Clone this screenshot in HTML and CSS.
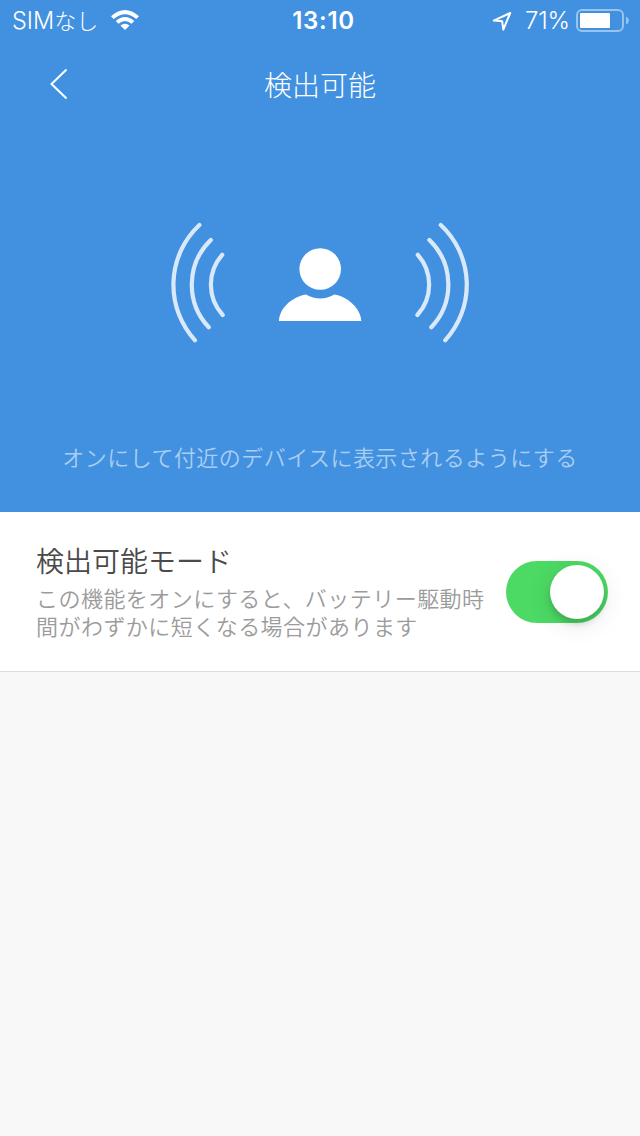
FILE: index.html
```html
<!DOCTYPE html>
<html lang="ja">
  <head>
    <meta charset="UTF-8" />
    <meta name="viewport" content="width=device-width, initial-scale=1.0" />
    <title>検出可能</title>
    <link rel="stylesheet" href="styles.css">
  </head>
  <body>
    <header class="hero">
      <div class="status">
        <div class="status-left">
          <span class="carrier">SIM<span class="carrier-ja">なし</span></span>
          <svg class="wifi" width="30" height="22" viewBox="0 0 30 22">
            <path d="M1 6.2 Q15 -6.2 29 6.2 L26.3 9.1 Q15 -0.5 3.7 9.1 Z" />
            <path d="M5.7 11 Q15 2.8 24.3 11 L21.5 13.8 Q15 8.4 8.5 13.8 Z" />
            <path d="M10.4 15.6 Q15 11.8 19.6 15.6 L15 20 Z" />
          </svg>
        </div>
        <span class="time">13:10</span>
        <div class="status-right">
          <svg class="arrow" width="20" height="20" viewBox="0 0 20 20">
            <path d="M1.8 9.6 L18.2 2 L11.3 18.6 L10.2 10.3 Z" />
          </svg>
          <span class="percent">71%</span>
          <svg class="battery" width="54" height="24" viewBox="0 0 54 24">
            <rect class="battery-case" x="1" y="1" width="46" height="21" rx="5" />
            <rect class="battery-level" x="4" y="4" width="30" height="15" rx="1" />
            <path class="battery-tip" d="M50 7.5 Q53 9 53 11.5 Q53 14 50 15.5 Z" />
          </svg>
        </div>
      </div>

      <nav class="nav">
        <svg class="back" width="20" height="32" viewBox="0 0 20 32">
          <path d="M17.5 1.5 L2.5 16 L17.5 30.5" />
        </svg>
        <h1>検出可能</h1>
      </nav>

      <svg class="signal" width="300" height="122" viewBox="170 222 300 122">
        <g class="waves">
          <path d="M199.4 225 A82 82 0 0 0 195 340.3" />
          <path d="M210.8 240 A62 62 0 0 0 208.8 327.3" />
          <path d="M222.2 254.8 A45 45 0 0 0 222.7 315" />
          <path d="M440.8 225 A82 82 0 0 1 445.2 340.3" />
          <path d="M429.4 240 A62 62 0 0 1 431.3 327.3" />
          <path d="M417.8 254.8 A45 45 0 0 1 417.4 315" />
        </g>
        <circle cx="320.2" cy="269" r="20.8" />
        <path d="M279 321 C279.5 308 292 297 306 294.5 Q320.2 302.5 334.4 294.5 C348.5 297 361 309 361.3 321 Z" />
      </svg>

      <p class="hint">オンにして付近のデバイスに表示されるようにする</p>
    </header>

    <main class="setting">
      <div class="setting-text">
        <h2>検出可能モード</h2>
        <p>この機能をオンにすると、バッテリー駆動時間がわずかに短くなる場合があります</p>
      </div>
      <div class="toggle"><div class="knob"></div></div>
    </main>
  </body>
</html>
```

FILE: styles.css
```css
* {
  margin: 0;
  padding: 0;
  box-sizing: border-box;
}
body {
  background-color: #f8f8f8;
  font-family: "Inter", "Noto Sans CJK JP", sans-serif;
  font-weight: 350;
}
.hero {
  height: 512px;
  background-color: #4191e0;
  color: white;
  display: flex;
  flex-direction: column;
  align-items: center;
}

.status {
  width: 100%;
  height: 42px;
  padding: 0 10px 0 12px;
  display: grid;
  grid-template-columns: 1fr auto 1fr;
  align-items: center;
  font-size: 24px;
  line-height: 42px;
}
.status-left,
.status-right {
  display: flex;
  align-items: center;
}
.status-right {
  justify-content: flex-end;
}
.carrier {
  font-size: 23.5px;
}
.carrier-ja {
  font-size: 22px;
  font-weight: 300;
}
.wifi {
  margin-left: 12px;
  fill: white;
}
.time {
  padding-left: 5px;
  font-size: 24px;
  font-weight: 600;
  letter-spacing: 0.7px;
}
.arrow {
  margin-right: 13px;
  fill: none;
  stroke: white;
  stroke-width: 2;
  stroke-linejoin: round;
}
.percent {
  letter-spacing: -0.1px;
}
.battery {
  margin-left: 6px;
}
.battery-case {
  fill: none;
  stroke: #98c3ee;
  stroke-width: 2;
}
.battery-level {
  fill: white;
}
.battery-tip {
  fill: #98c3ee;
}

.nav {
  width: 100%;
  height: 86px;
  padding-left: 49px;
  display: grid;
  grid-template-columns: 20px 1fr 69px;
  align-items: center;
}
.back {
  margin-bottom: 2px;
  fill: none;
  stroke: white;
  stroke-width: 2;
}
.nav h1 {
  padding-top: 2px;
  font-size: 28px;
  font-weight: 300;
  line-height: 40px;
  text-align: center;
}

.signal {
  margin-top: 94px;
  fill: white;
}
.waves {
  fill: none;
  stroke: #d9e9f9;
  stroke-width: 4.2;
  stroke-linecap: round;
}
.hint {
  margin-top: 98px;
  color: #a9cef2;
  font-size: 22px;
  letter-spacing: 0.46px;
  line-height: 32px;
}

.setting {
  height: 160px;
  padding: 30px 32px 0 36px;
  display: flex;
  justify-content: space-between;
  background-color: white;
  border-bottom: 1px solid #dedede;
}
.setting-text {
  width: 452px;
}
.setting h2 {
  color: #4a4a4a;
  font-size: 28px;
  font-weight: 350;
  line-height: 40px;
}
.setting p {
  margin-top: 3px;
  color: #9b9b9b;
  font-size: 22px;
  letter-spacing: 0.46px;
  line-height: 28px;
}
.toggle {
  width: 102px;
  height: 62px;
  margin-top: 19px;
  padding: 4px;
  display: flex;
  justify-content: flex-end;
  border-radius: 31px;
  background-color: #4cd964;
}
.knob {
  width: 54px;
  height: 54px;
  border-radius: 50%;
  background-color: white;
  box-shadow: 0 5px 6px rgba(0, 0, 0, 0.15), 0 5px 26px rgba(0, 0, 0, 0.1);
}
```
